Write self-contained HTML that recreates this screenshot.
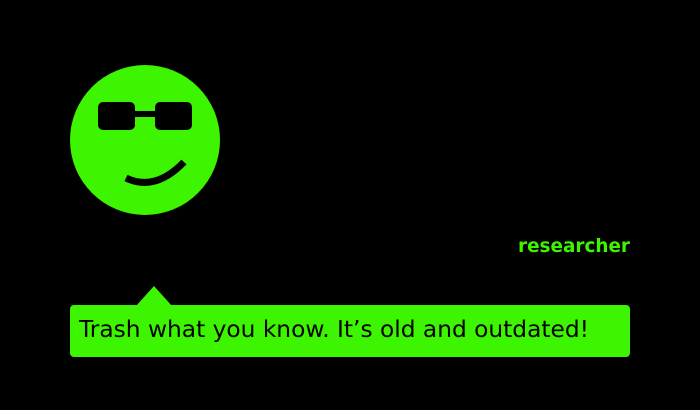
<!DOCTYPE html>
<html><head><style>
html,body{margin:0;padding:0;background:#000;width:700px;height:410px;overflow:hidden}
.r{position:absolute;right:70px;top:236px;color:#3df500;font:bold 18.4px "DejaVu Sans",sans-serif}
.b{position:absolute;left:70px;top:305px;width:560px;height:52px;background:#3df500;border-radius:4px}
.t{position:absolute;left:79px;top:316px;font:23.3px "DejaVu Sans",sans-serif;color:#000;white-space:nowrap}
</style></head><body>
<svg width="700" height="410" style="position:absolute;left:0;top:0">
<circle cx="145" cy="140" r="75" fill="#3df500"/>
<rect x="98" y="102" width="37" height="28" rx="5" fill="#000"/>
<rect x="155" y="102" width="37" height="28" rx="5" fill="#000"/>
<rect x="133" y="111" width="24" height="6" fill="#000"/>
<path d="M126 178 Q155 192 184 162" stroke="#000" stroke-width="7" fill="none"/>
<polygon points="136,306 154,286 172,306" fill="#3df500"/>
</svg>
<div class="r">researcher</div>
<div class="b"></div>
<div class="t">Trash what you know. It’s old and outdated!</div>
</body></html>
